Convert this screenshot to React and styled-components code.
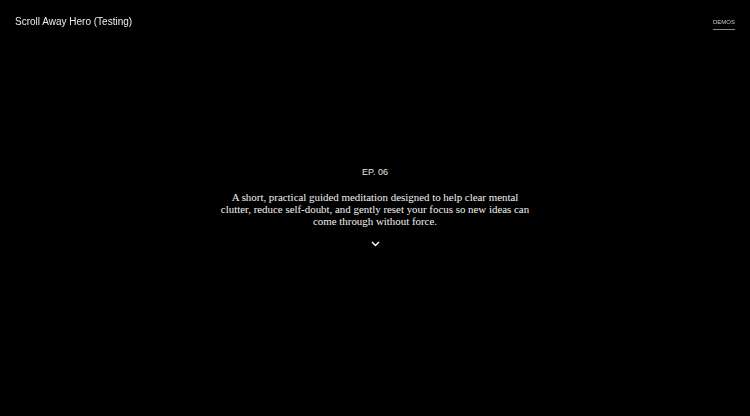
import { createGlobalStyle, styled } from "styled-components";

const GlobalStyle = createGlobalStyle`
  html, body {
    margin: 0;
    padding: 0;
    background: #000;
  }
  body {
    font-family: "Liberation Sans", Arial, sans-serif;
    color: #fff;
  }
`;

const Header = styled.header`
  position: fixed;
  top: 0;
  left: 0;
  right: 0;
  height: 42px;
  display: flex;
  align-items: center;
  justify-content: space-between;
  padding: 0 15px;
  z-index: 10;
`;

const Title = styled.h1`
  margin: 0;
  font-size: 10px;
  font-weight: 400;
  color: #ececec;
`;

const NavLink = styled.a`
  font-size: 6px;
  text-transform: uppercase;
  color: #c8c8c8;
  text-decoration: none;
  padding-bottom: 4px;
  border-bottom: 1px solid #8a8a8a;
  margin-top: 6px;
`;

const Hero = styled.section`
  height: 416px;
  display: flex;
  flex-direction: column;
  align-items: center;
  justify-content: center;
  text-align: center;
`;

const Episode = styled.div`
  font-size: 9px;
  color: #e6e6e6;
  margin-bottom: 14px;
`;

const Description = styled.p`
  margin: 0;
  max-width: 316px;
  font-family: "Liberation Serif", "Times New Roman", serif;
  font-size: 10.9px;
  line-height: 12px;
  color: #f2f2f2;
`;

const Chevron = styled.div`
  margin-top: 14px;
  height: 8px;
  display: flex;
  justify-content: center;
`;

export default function App() {
  return (
    <>
      <GlobalStyle />
      <Header>
        <Title>Scroll Away Hero (Testing)</Title>
        <NavLink href="#">Demos</NavLink>
      </Header>
      <Hero>
        <Episode>EP. 06</Episode>
        <Description>
          A short, practical guided meditation designed to help clear mental
          clutter, reduce self-doubt, and gently reset your focus so new ideas
          can come through without force.
        </Description>
        <Chevron>
          <svg width="9" height="6" viewBox="0 0 9 6" fill="none">
            <path d="M1 1l3.5 3.5L8 1" stroke="#fff" strokeWidth="1.4" />
          </svg>
        </Chevron>
      </Hero>
    </>
  );
}
